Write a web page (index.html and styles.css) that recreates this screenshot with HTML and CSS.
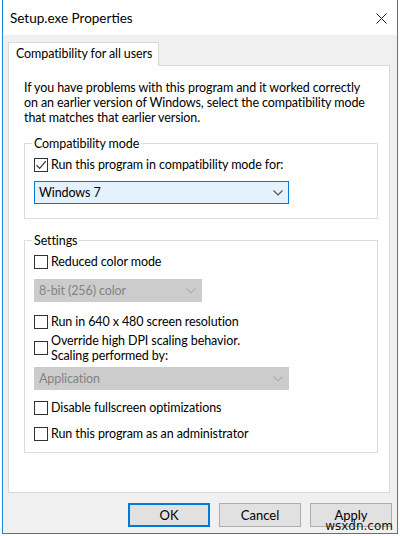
FILE: index.html
```html
<!DOCTYPE html>
<html>
<head>
<meta charset="utf-8">
<link rel="stylesheet" href="styles.css">
</head>
<body>
<div class="window">
  <div class="titlebar">
    <span class="title">Setup.exe Properties</span>
    <svg class="close" width="11" height="11" viewBox="0 0 11 11"><path d="M0.5 0.5 L10.5 10.5 M10.5 0.5 L0.5 10.5" stroke="#222" stroke-width="1" fill="none"/></svg>
  </div>
  <div class="content">
    <div class="tabs"><div class="tab">Compatibility for all users</div></div>
    <div class="panel">
      <p class="intro">If you have problems with this program and it worked correctly<br>on an earlier version of Windows, select the compatibility mode<br>that matches that earlier version.</p>
      <fieldset class="group compat">
        <legend>Compatibility mode</legend>
        <div class="row">
          <span class="check checked"><svg width="12" height="12" viewBox="0 0 12 12"><path d="M1.5 6.2 L4.6 9.3 L10.8 2.2" stroke="#333" stroke-width="1.2" fill="none"/></svg></span>
          <span>Run this program in compatibility mode for:</span>
        </div>
        <div class="select active">
          <span>Windows 7</span>
          <svg width="10" height="6" viewBox="0 0 10 6"><path d="M0.5 0.5 L5 5 L9.5 0.5" stroke="#555" stroke-width="1.2" fill="none"/></svg>
        </div>
      </fieldset>
      <fieldset class="group settings">
        <legend>Settings</legend>
        <div class="row"><span class="check"></span><span>Reduced color mode</span></div>
        <div class="select disabled short">
          <span>8-bit (256) color</span>
          <svg width="10" height="6" viewBox="0 0 10 6"><path d="M0.5 0.5 L5 5 L9.5 0.5" stroke="#b0b0b0" stroke-width="1.2" fill="none"/></svg>
        </div>
        <div class="row r640"><span class="check"></span><span>Run in 640 x 480 screen resolution</span></div>
        <div class="row two"><span class="check"></span><span class="twolines">Override high DPI scaling behavior.<br>Scaling performed by:</span></div>
        <div class="select disabled app">
          <span>Application</span>
          <svg width="10" height="6" viewBox="0 0 10 6"><path d="M0.5 0.5 L5 5 L9.5 0.5" stroke="#b0b0b0" stroke-width="1.2" fill="none"/></svg>
        </div>
        <div class="row rfs"><span class="check"></span><span>Disable fullscreen optimizations</span></div>
        <div class="row radmin"><span class="check"></span><span>Run this program as an administrator</span></div>
      </fieldset>
    </div>
    <div class="buttons">
      <button class="btn default">OK</button>
      <button class="btn">Cancel</button>
      <button class="btn">Apply</button>
    </div>
  </div>
  <span class="watermark">wsxdn.com</span>
</div>
</body>
</html>
```
FILE: styles.css
```css
html, body {
  margin: 0;
  padding: 0;
  background: #ffffff;
}
body {
  font-family: Lato, "Noto Sans", sans-serif;
  font-size: 12.5px;
  letter-spacing: -0.1px;
  color: #000;
}
.window {
  position: relative;
  box-sizing: border-box;
  margin-left: 2px;
  width: 396px;
  height: 534px;
  border: 1px solid #1883d7;
  border-top: 0;
  background: #f0f0f0;
  display: flex;
  flex-direction: column;
}
.titlebar {
  height: 35px;
  flex: none;
  background: #fff;
  display: flex;
  align-items: center;
  justify-content: space-between;
  padding: 0 10px 0 7px;
}
.title {
  font-size: 13.5px;
  letter-spacing: 0;
  color: #000;
}
.close {
  display: block;
  margin-top: 1px;
}
.content {
  flex: 1;
  display: flex;
  flex-direction: column;
  padding: 7px 7px 0 5px;
}
.tabs {
  display: flex;
  height: 23px;
  position: relative;
  z-index: 1;
}
.tab {
  box-sizing: border-box;
  width: 151px;
  height: 24px;
  background: #fff;
  border: 1px solid #d9d9d9;
  border-bottom: 0;
  padding: 0 0 0 7px;
  line-height: 22px;
  white-space: nowrap;
}
.panel {
  box-sizing: border-box;
  height: 428px;
  background: #fff;
  border: 1px solid #d9d9d9;
  padding: 14px 11px 0 15px;
}
.intro {
  margin: 0;
  line-height: 15px;
  white-space: nowrap;
}
.group {
  margin: 11px 0 0 0;
  border: 1px solid #dcdcdc;
  padding: 6px 10px 14px 9px;
  min-width: 0;
}
.group.settings {
  margin-top: 14px;
  padding-bottom: 11px;
}
.group legend {
  padding: 0 2px;
  margin-left: -2px;
  line-height: 15px;
}
.row {
  display: flex;
  align-items: center;
  gap: 3px;
  line-height: 15px;
}
.twolines {
  line-height: 15px;
}
.check {
  box-sizing: border-box;
  width: 14px;
  height: 14px;
  border: 1px solid #333;
  background: #fff;
  flex: none;
  display: flex;
  align-items: center;
  justify-content: center;
}
.check svg { display: block; }
.select {
  box-sizing: border-box;
  height: 23px;
  width: 255px;
  display: flex;
  align-items: center;
  justify-content: space-between;
  padding: 0 5px 0 4px;
  border: 1px solid;
}
.select svg { display: block; }
.select.active {
  margin-top: 9px;
  background: #e5f1fb;
  border-color: #0078d7;
}
.select.disabled {
  background: #cccccc;
  border-color: #cccccc;
  color: #838383;
}
.select.short {
  width: 168px;
  margin-top: 10px;
}
.r640 { margin-top: 12px; }
.row.two { margin-top: 4px; }
.select.app { margin-top: 4px; }
.rfs { margin-top: 10px; }
.radmin { margin-top: 11px; }
.buttons {
  display: flex;
  justify-content: flex-end;
  gap: 9px;
  margin-top: 10px;
  margin-right: -2px;
}
.btn {
  box-sizing: border-box;
  width: 82px;
  height: 24px;
  background: #e1e1e1;
  border: 1px solid #adadad;
  font-family: Lato, "Noto Sans", sans-serif;
  font-size: 13px;
  color: #000;
  padding: 0;
  margin: 0;
}
.btn.default {
  border: 2px solid #0078d7;
}
.watermark {
  position: absolute;
  right: 4px;
  bottom: 0px;
  font-family: "DejaVu Sans", sans-serif;
  font-size: 12px;
  letter-spacing: 0;
  color: #111;
  line-height: 13px;
}
```
